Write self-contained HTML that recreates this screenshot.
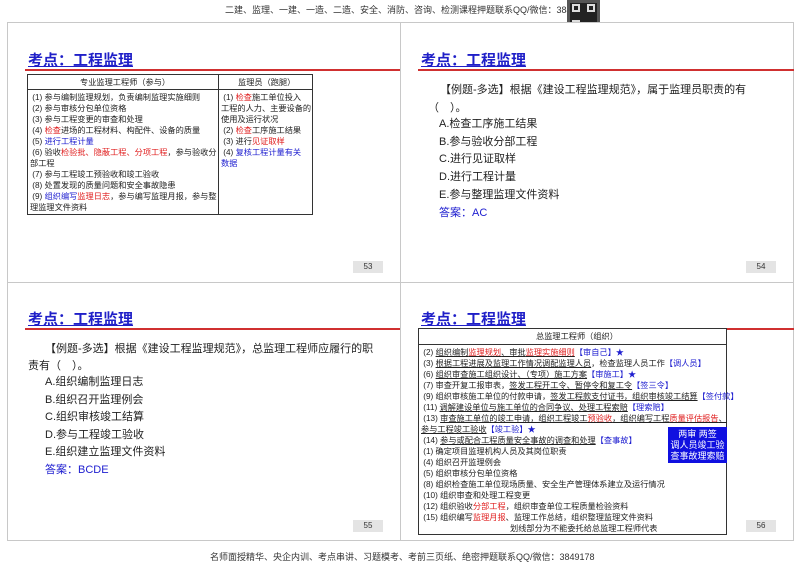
<!DOCTYPE html>
<html><head><meta charset="utf-8">
<style>
*{margin:0;padding:0;box-sizing:border-box}
body{width:800px;height:566px;background:#fff;position:relative;overflow:hidden;font-family:"Liberation Sans","Noto Sans CJK SC",sans-serif;color:#222}
.a{position:absolute;white-space:nowrap}
.slide{position:absolute;border:1px solid #c8c8c8;background:#fff}
.t{font-size:15px;line-height:15px;font-weight:bold;color:#1f1fc8;text-decoration:underline;text-decoration-thickness:1px}
.rl{position:absolute;height:1.5px;background:#d03030}
.pn{position:absolute;width:30px;height:12px;background:#e4e4e4;font-size:8px;text-align:center;line-height:12px;color:#333}
.r{color:#e02020}.b{color:#2020d0}
.tb{position:absolute;border:1px solid #333}
.s9{font-size:8.2px;line-height:11px}
.q{font-size:11px;color:#222}
.u{text-decoration:underline}
</style></head><body>
<div class="a" style="left:225px;top:3px;font-size:9px;color:#333">二建、监理、一建、一造、二造、安全、消防、咨询、检测课程押题联系QQ/微信：3849178</div>
<div class="a" style="left:567px;top:0;width:33px;height:33px;background:#222;border:3px solid #555"></div>
<div class="a" style="left:572px;top:4px;width:8px;height:8px;border:2px solid #ddd"></div>
<div class="a" style="left:587px;top:4px;width:8px;height:8px;border:2px solid #ddd"></div>
<div class="a" style="left:572px;top:20px;width:8px;height:8px;border:2px solid #ddd"></div>

<!-- slide 1 -->
<div class="slide" style="left:7px;top:22px;width:394px;height:261px"></div>
<div class="a t" style="left:28px;top:53px">考点：工程监理</div>
<div class="rl" style="left:25px;top:69px;width:376px"></div>
<div class="tb" style="left:27px;top:74px;width:286px;height:141px"></div>
<div class="a" style="left:218px;top:74px;width:1px;height:141px;background:#333"></div>
<div class="a" style="left:27px;top:89px;width:286px;height:1px;background:#333"></div>
<div class="a s9" style="left:80px;top:77px">专业监理工程师（参与）</div>
<div class="a s9" style="left:238px;top:77px">监理员（跑腿）</div>
<div class="a s9" style="left:30px;top:92px">
&nbsp;(1) 参与编制监理规划，负责编制监理实施细则<br>
&nbsp;(2) 参与审核分包单位资格<br>
&nbsp;(3) 参与工程变更的审查和处理<br>
&nbsp;(4) <span class="r">检查</span>进场的工程材料、构配件、设备的质量<br>
&nbsp;(5) <span class="b">进行工程计量</span><br>
&nbsp;(6) 验收<span class="r">检验批、隐蔽工程、分项工程</span>，参与验收分<br>部工程<br>
&nbsp;(7) 参与工程竣工预验收和竣工验收<br>
&nbsp;(8) 处置发现的质量问题和安全事故隐患<br>
&nbsp;(9) <span class="b">组织编写</span><span class="r">监理日志</span>，参与编写监理月报，参与整<br>理监理文件资料</div>
<div class="a s9" style="left:221px;top:92px">
&nbsp;(1) <span class="r">检查</span>施工单位投入<br>工程的人力、主要设备的<br>使用及运行状况<br>
&nbsp;(2) <span class="r">检查</span>工序施工结果<br>
&nbsp;(3) 进行<span class="r">见证取样</span><br>
&nbsp;(4) <span class="b">复核工程计量有关<br>数据</span></div>
<div class="pn" style="left:353px;top:261px">53</div>

<!-- slide 2 -->
<div class="slide" style="left:400px;top:22px;width:394px;height:261px"></div>
<div class="a t" style="left:421px;top:53px">考点：工程监理</div>
<div class="rl" style="left:418px;top:69px;width:376px"></div>
<div class="a q" style="left:440px;top:81px">【例题-多选】根据《建设工程监理规范》，属于监理员职责的有</div>
<div class="a q" style="left:428px;top:99px">（　）。</div>
<div class="a q" style="left:439px;top:116px;line-height:17.7px">A.检查工序施工结果<br>B.参与验收分部工程<br>C.进行见证取样<br>D.进行工程计量<br>E.参与整理监理文件资料<br><span class="b">答案：AC</span></div>
<div class="pn" style="left:746px;top:261px">54</div>

<!-- slide 3 -->
<div class="slide" style="left:7px;top:282px;width:394px;height:259px"></div>
<div class="a t" style="left:28px;top:312px">考点：工程监理</div>
<div class="rl" style="left:25px;top:328px;width:376px"></div>
<div class="a q" style="left:45px;top:340px">【例题-多选】根据《建设工程监理规范》，总监理工程师应履行的职</div>
<div class="a q" style="left:28px;top:357px">责有（　）。</div>
<div class="a q" style="left:45px;top:374px;line-height:17.6px">A.组织编制监理日志<br>B.组织召开监理例会<br>C.组织审核竣工结算<br>D.参与工程竣工验收<br>E.组织建立监理文件资料<br><span class="b">答案：BCDE</span></div>
<div class="pn" style="left:353px;top:520px">55</div>

<!-- slide 4 -->
<div class="slide" style="left:400px;top:282px;width:394px;height:259px"></div>
<div class="a t" style="left:421px;top:312px">考点：工程监理</div>
<div class="rl" style="left:726px;top:328px;width:68px"></div>
<div class="tb" style="left:418px;top:328px;width:309px;height:207px"></div>
<div class="a" style="left:418px;top:344px;width:309px;height:1px;background:#333"></div>
<div class="a s9" style="left:536px;top:331px">总监理工程师（组织）</div>
<div class="a s9" style="left:421px;top:347px">
&nbsp;(2) <span class="u">组织编制<span class="r">监理规划</span>、审批<span class="r">监理实施细则</span></span><span class="b">【审自己】★</span><br>
&nbsp;(3) <span class="u">根据工程进展及监理工作情况调配监理人员</span>，检查监理人员工作<span class="b">【调人员】</span><br>
&nbsp;(6) <span class="u">组织审查施工组织设计、（专项）施工方案</span><span class="b">【审施工】★</span><br>
&nbsp;(7) 审查开复工报审表，<span class="u">签发工程开工令、暂停令和复工令</span><span class="b">【签三令】</span><br>
&nbsp;(9) 组织审核施工单位的付款申请，<span class="u">签发工程款支付证书，组织审核竣工结算</span><span class="b">【签付款】</span><br>
&nbsp;(11) <span class="u">调解建设单位与施工单位的合同争议、处理工程索赔</span><span class="b">【理索赔】</span><br>
&nbsp;(13) <span class="u">审查施工单位的竣工申请，组织工程竣工<span class="r">预验收</span>，组织编写工程<span class="r">质量评估报告</span>、</span><br>
<span class="u">参与工程竣工验收</span><span class="b">【竣工验】★</span><br>
&nbsp;(14) <span class="u">参与或配合工程质量安全事故的调查和处理</span><span class="b">【查事故】</span><br>
&nbsp;(1) 确定项目监理机构人员及其岗位职责<br>
&nbsp;(4) 组织召开监理例会<br>
&nbsp;(5) 组织审核分包单位资格<br>
&nbsp;(8) 组织检查施工单位现场质量、安全生产管理体系建立及运行情况<br>
&nbsp;(10) 组织审查和处理工程变更<br>
&nbsp;(12) 组织验收<span class="r">分部工程</span>，组织审查单位工程质量检验资料<br>
&nbsp;(15) 组织编写<span class="r">监理月报</span>、监理工作总结，组织整理监理文件资料</div>
<div class="a s9" style="left:510px;top:523px">划线部分为不能委托给总监理工程师代表</div>
<div class="a" style="left:668px;top:427px;width:59px;height:36px;background:#1010e0;color:#fff;font-size:9px;line-height:11px;text-align:center;padding-top:2px">两审 两签<br>调人员竣工验<br>查事故理索赔</div>
<div class="pn" style="left:746px;top:520px">56</div>

<div class="a" style="left:210px;top:550px;font-size:9px;color:#333">名师面授精华、央企内训、考点串讲、习题模考、考前三页纸、绝密押题联系QQ/微信：3849178</div>
</body></html>
